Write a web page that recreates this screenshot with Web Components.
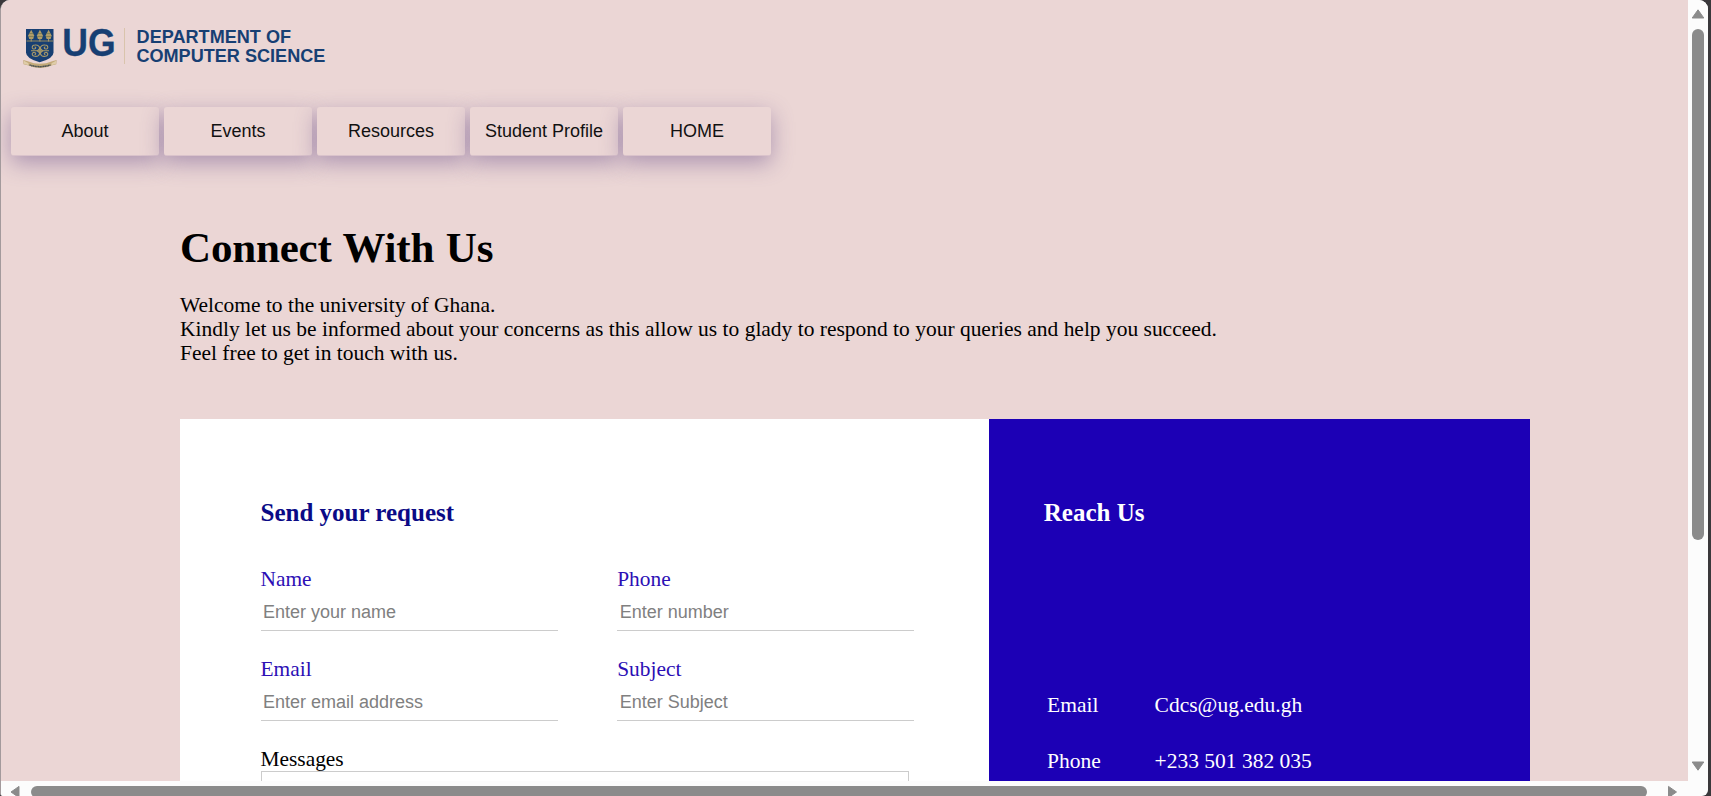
<!DOCTYPE html>
<html lang="en">
<head>
<meta charset="utf-8">
<title>Connect With Us</title>
<style>
html,body{margin:0;height:100%;overflow:hidden;background:#3a383b}
body{font-family:"Liberation Serif","Times New Roman",serif;color:#000}
</style>
</head>
<body>
<app-window>
  <contact-page>
    <ug-logo></ug-logo>
    <nav-bar>
      <nav-button>About</nav-button>
      <nav-button>Events</nav-button>
      <nav-button>Resources</nav-button>
      <nav-button>Student Profile</nav-button>
      <nav-button>HOME</nav-button>
    </nav-bar>
    <page-intro></page-intro>
    <contact-card>
      <request-form slot="form"></request-form>
      <reach-us slot="info"></reach-us>
    </contact-card>
  </contact-page>
  <scroll-bar slot="v" direction="v"></scroll-bar>
  <scroll-bar slot="h" direction="h"></scroll-bar>
</app-window>
<script>
const define = (name, html) => customElements.define(name, class extends HTMLElement {
  constructor() {
    super();
    this.attachShadow({ mode: 'open' }).innerHTML = typeof html === 'function' ? html(this) : html;
  }
});

define('app-window', `<style>
:host{display:grid;grid-template-columns:1687px 20px;grid-template-rows:781px 19px;width:1707px;height:796px;border-left:1px solid #a39a9c;border-radius:10px 9px 6px 3px;overflow:hidden;background:#fcfcfc;box-sizing:content-box}
main{overflow:hidden;background:#ebd6d5}
</style><main><slot></slot></main><slot name="v"></slot><slot name="h"></slot>`);

define('scroll-bar', el => el.getAttribute('direction') === 'v' ? `<style>
:host{display:flex;flex-direction:column;align-items:center;background:#fcfcfc;height:781px;padding-top:9px;box-sizing:border-box;padding-right:1px}
i{width:12px;height:511px;border-radius:6px;background:#8b8b8b;margin:10px 0 221px}
svg{display:block;flex:none}
</style><svg width="14" height="10"><path d="M7 .8 12.8 9H1.2Z" fill="#8b8b8b" stroke="#8b8b8b" stroke-linejoin="round"/></svg><i></i><svg width="14" height="10"><path d="M7 9.2 12.8 1H1.2Z" fill="#8b8b8b" stroke="#8b8b8b" stroke-linejoin="round"/></svg>` : `<style>
:host{display:flex;align-items:flex-start;background:#fcfcfc;padding:4px 0 0 9px}
i{width:1616px;height:12px;border-radius:6px;background:#8b8b8b;margin:1px 20px 0 11px;flex:none}
svg{display:block;flex:none}
</style><svg width="10" height="14"><path d="M1 7 9 1.4V12.6Z" fill="#8b8b8b" stroke="#8b8b8b" stroke-linejoin="round"/></svg><i></i><svg width="10" height="14"><path d="M9.5 7 1.5 1.4V12.6Z" fill="#8b8b8b" stroke="#8b8b8b" stroke-linejoin="round"/></svg>`);

define('contact-page', `<style>:host{display:flex;flex-direction:column}</style><slot></slot>`);

define('ug-logo', `<style>:host{display:block;height:107px}svg{display:block}
text{font-family:"Liberation Sans",Arial,sans-serif;font-weight:700;fill:#173f73}</style>
<svg width="340" height="90" viewBox="1 0 340 90">
<path d="M26 29H53.5V52.5Q53.5 58.5 39.7 62.3 26 58.5 26 52.5Z" fill="#173f73"/>
<path d="M26.5 41H53" stroke="#a3925f" stroke-width=".9"/>
<g fill="#b09c68"><path d="M31.2 29.8 34.2 35.4 33.2 39H29.2L28.2 35.4Z"/><path d="M39.9 29.8 42.9 35.4 41.9 39H37.9L36.9 35.4Z"/><path d="M48.6 29.8 51.6 35.4 50.6 39H46.6L45.6 35.4Z"/><path d="M31.2 38V41.5M39.9 38V41.5M48.6 38V41.5" stroke="#b09c68" stroke-width="1"/></g>
<path d="M28.9 33.5h4.6M28.6 36.5h5.2M37.6 33.5h4.6M37.3 36.5h5.2M46.3 33.5h4.6M46 36.5h5.2" stroke="#67714f" stroke-width=".6"/>
<g fill="none" stroke="#a99a68" stroke-width="1.05">
<path d="M31 50.7H49M40 46.3V55.2"/>
<path d="M40 50.3C40 45.8 37.6 44.7 34.8 45.1 31.2 45.5 31.6 49.3 34.3 49 36.4 48.8 36 46.7 34.6 47.1"/>
<path d="M40 50.3C40 45.8 42.4 44.7 45.2 45.1 48.8 45.5 48.4 49.3 45.7 49 43.6 48.8 44 46.7 45.4 47.1"/>
<path d="M40 51.1C40 55.6 37.6 56.7 34.8 56.3 31.2 55.9 31.6 52.1 34.3 52.4 36.4 52.6 36 54.7 34.6 54.3"/>
<path d="M40 51.1C40 55.6 42.4 56.7 45.2 56.3 48.8 55.9 48.4 52.1 45.7 52.4 43.6 52.6 44 54.7 45.4 54.3"/>
<path d="M40 48.2 42.7 50.7 40 53.2 37.3 50.7Z"/></g>
<path d="M23.3 60 27.8 61.3Q40 66.3 52.2 61.3L56.6 60 56.3 64.2 52.3 65.3Q40 70.5 27.7 65.3L23.5 64.2Z" fill="#c3aa79"/>
<path d="M24 60.8 28.5 63.2V65.2L24 63.8M56 60.8 51.5 63.2V65.2L56 63.8" fill="#dfcda9"/>
<path d="M29.5 64.9Q40 68.4 50.5 64.9" fill="none" stroke="#4a5152" stroke-width="1.5" stroke-dasharray="1.4 .3"/>
<text x="62.3" y="56" font-size="38" textLength="53.3" lengthAdjust="spacingAndGlyphs" stroke="#173f73" stroke-width=".3">UG</text>
<path d="M124.5 28V64" stroke="#d9c4ac" stroke-width="1"/>
<text x="136.6" y="42.6" font-size="19" textLength="154.5" lengthAdjust="spacingAndGlyphs">DEPARTMENT OF</text>
<text x="136.4" y="62" font-size="19" textLength="189" lengthAdjust="spacingAndGlyphs">COMPUTER SCIENCE</text>
</svg>`);

define('nav-bar', `<style>:host{display:flex;gap:5px;padding-left:10px;height:49px}</style><slot></slot>`);
define('nav-button', `<style>
:host{display:flex;align-items:center;justify-content:center;width:148px;height:49px;box-sizing:border-box;border-radius:3px;border-bottom:1px solid #dac3cb;background:#ebd6d5;box-shadow:0 7px 22px rgba(105,78,138,.48);font:18px "Liberation Sans",Arial,sans-serif;color:#111;flex:none}
</style><slot></slot>`);

define('page-intro', `<style>
:host{display:block;padding:67px 0 0 179px;height:263px;box-sizing:border-box}
h1{margin:0;font-size:43px;line-height:50px;letter-spacing:-.17px;word-spacing:1px}
p{margin:20px 0 0;font-size:21.48px;line-height:24.2px;white-space:nowrap}
</style><h1>Connect With Us</h1><p>Welcome to the university of Ghana.<br>Kindly let us be informed about your concerns as this allow us to glady to respond to your queries and help you succeed.<br>Feel free to get in touch with us.</p>`);

define('contact-card', `<style>
:host{display:grid;grid-template-columns:809.4px 540.6px;margin-left:179px;height:500px}
</style><slot name="form"></slot><slot name="info"></slot>`);

define('request-form', `<style>
:host{display:block;background:#fff;padding:79px 75px 0 80.5px}
h2{margin:0;font-size:25px;line-height:30px;color:#0a0a86}
.grid{display:grid;grid-template-columns:297px 297px;column-gap:59.7px;grid-auto-rows:90px;margin-top:39px}
.m{font-size:21.4px;line-height:24px}
textarea{display:block;width:648px;height:120px;box-sizing:border-box;border:1px solid #ccc;margin:0;resize:none;outline:0}
</style><h2>Send your request</h2><div class="grid">
<form-field label="Name" hint="Enter your name"></form-field><form-field label="Phone" hint="Enter number"></form-field>
<form-field label="Email" hint="Enter email address"></form-field><form-field label="Subject" hint="Enter Subject"></form-field></div>
<div class="m">Messages</div><textarea></textarea>`);

define('form-field', el => `<style>
:host{display:block}
label{display:block;font-size:21.4px;line-height:24px;color:#2c0fb5}
input{display:block;box-sizing:border-box;width:297px;height:40px;border:0;border-bottom:1px solid #ccc;padding:3px 2px 0 2.5px;margin:0;background:none;font:18px "Liberation Sans",Arial,sans-serif;outline:0}
input::placeholder{color:#808080;opacity:1}
</style><label>${el.getAttribute('label')}</label><input placeholder="${el.getAttribute('hint')}">`);

define('reach-us', `<style>
:host{display:block;background:#1c00b5;color:#fff;padding:79px 0 0 54.4px}
h2{margin:0;font-size:25px;line-height:30px}
dl{display:grid;grid-template-columns:107.5px auto;grid-auto-rows:56px;margin:165px 0 0 3.3px;font-size:21.5px;line-height:24px}
dd{margin:0}
</style><h2>Reach Us</h2><dl><dt>Email</dt><dd>Cdcs@ug.edu.gh</dd><dt>Phone</dt><dd>+233 501 382 035</dd></dl>`);
</script>
</body>
</html>
